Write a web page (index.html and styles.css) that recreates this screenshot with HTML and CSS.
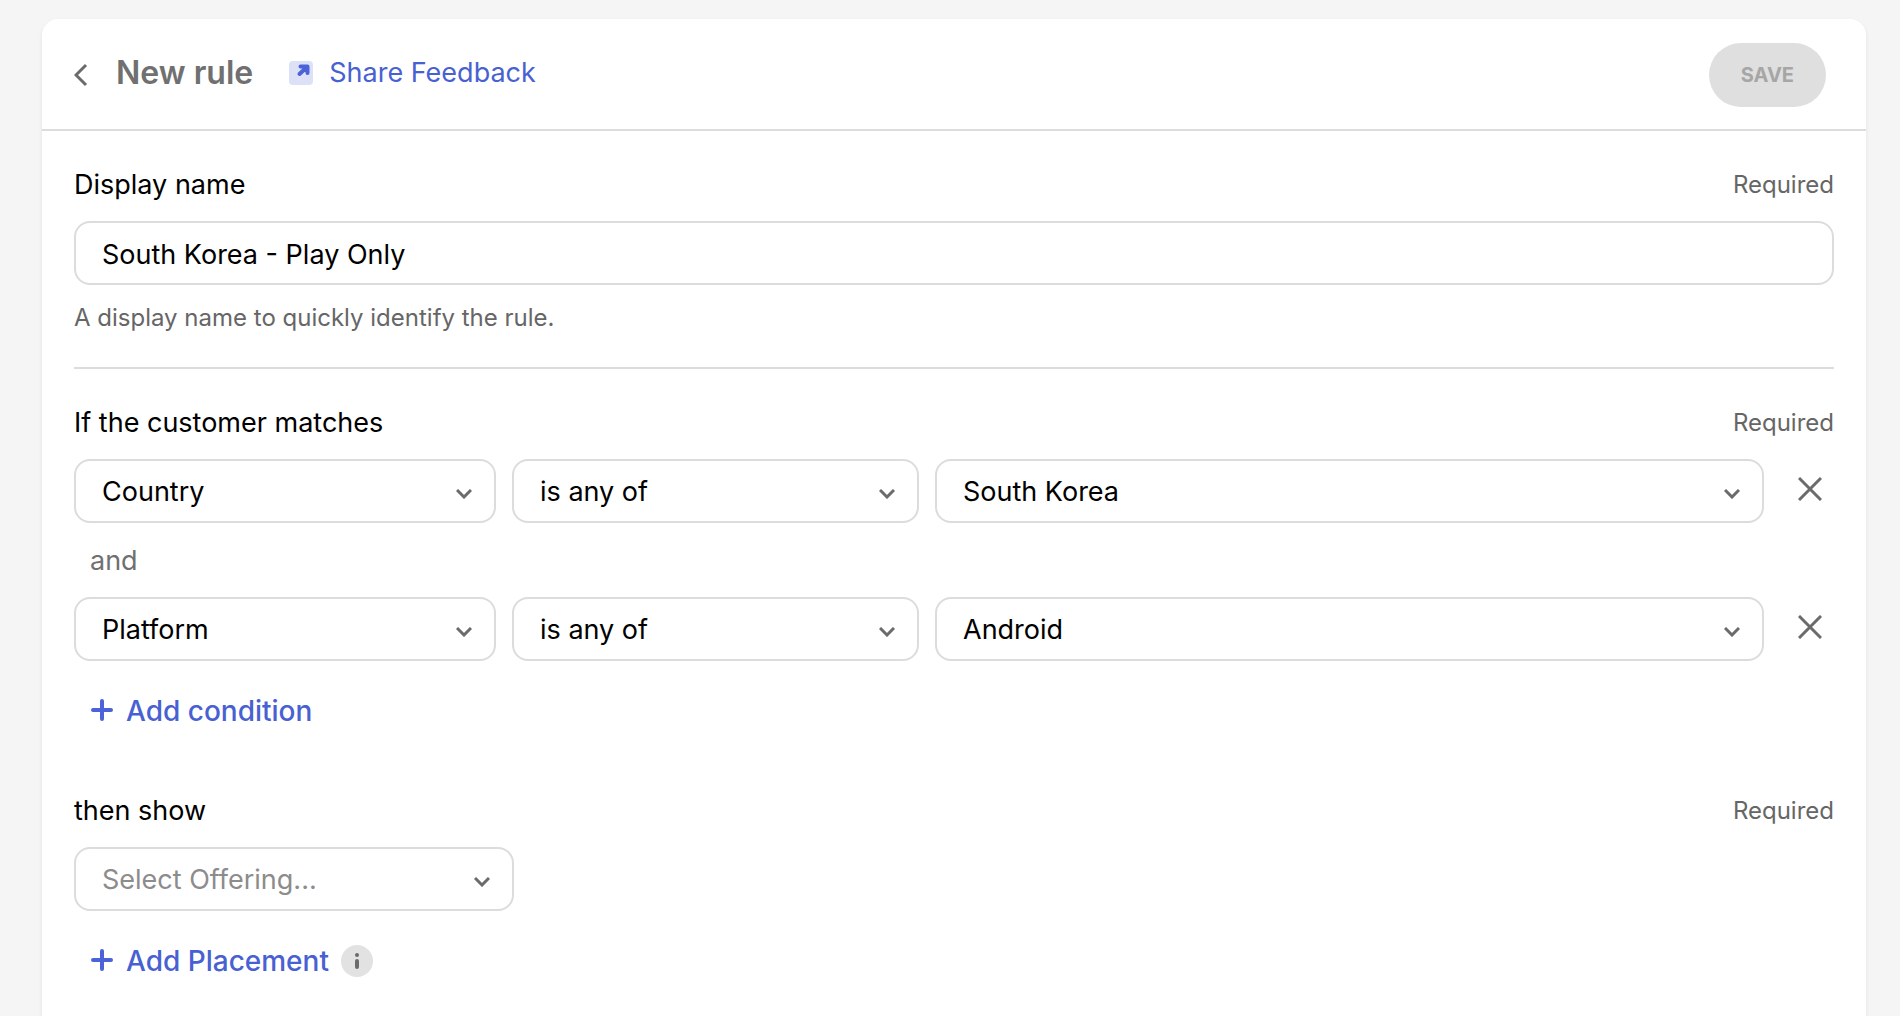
FILE: index.html
```
<!DOCTYPE html>
<html lang="en">
	<head>
		<meta charset="utf-8">
		<meta name="viewport" content="width=device-width, initial-scale=1">
		<title>New rule</title>
		<link rel="stylesheet" href="styles.css">
	</head>
	<body>
		<form class="card">
			<header class="header">
				<button type="button" class="back" aria-label="Back">
					<svg width="14" height="24" viewBox="0 0 14 24"><path d="M12 2L2 12l10 10"/></svg>
				</button>
				<h1>New rule</h1>
				<a href="#" class="feedback">
					<svg width="24" height="24" viewBox="0 0 24 24">
						<rect width="24" height="24" rx="4" fill="#dce1f7"/>
						<path d="M11.500 5.500h7v6.500M18 6l-7.500 7" fill="none" stroke="#4b62d8" stroke-width="4" stroke-linejoin="round" stroke-linecap="round"/>
					</svg>
					<span>Share Feedback</span>
				</a>
				<button type="submit" class="save" disabled>SAVE</button>
			</header>

			<main class="content">
				<section class="section">
					<div class="sectionTop">
						<label for="displayName">Display name</label>
						<span class="required">Required</span>
					</div>
					<input type="text" id="displayName" class="field" value="South Korea - Play Only">
					<p class="help">A display name to quickly identify the rule.</p>
				</section>

				<section class="section conditions">
					<div class="sectionTop">
						<h2>If the customer matches</h2>
						<span class="required">Required</span>
					</div>
					<div class="condition">
						<div class="select">
							<select class="field" aria-label="Attribute"><option>Country</option></select>
							<svg class="arrow" width="16" height="10" viewBox="0 0 16 10"><path d="M1 1l7 7 7-7"/></svg>
						</div>
						<div class="select">
							<select class="field" aria-label="Operator"><option>is any of</option></select>
							<svg class="arrow" width="16" height="10" viewBox="0 0 16 10"><path d="M1 1l7 7 7-7"/></svg>
						</div>
						<div class="select">
							<select class="field" aria-label="Value"><option>South Korea</option></select>
							<svg class="arrow" width="16" height="10" viewBox="0 0 16 10"><path d="M1 1l7 7 7-7"/></svg>
						</div>
						<button type="button" class="remove" aria-label="Remove condition">
							<svg width="24" height="24" viewBox="0 0 24 24"><path d="M1 1l22 22M23 1L1 23"/></svg>
						</button>
					</div>
					<p class="and">and</p>
					<div class="condition">
						<div class="select">
							<select class="field" aria-label="Attribute"><option>Platform</option></select>
							<svg class="arrow" width="16" height="10" viewBox="0 0 16 10"><path d="M1 1l7 7 7-7"/></svg>
						</div>
						<div class="select">
							<select class="field" aria-label="Operator"><option>is any of</option></select>
							<svg class="arrow" width="16" height="10" viewBox="0 0 16 10"><path d="M1 1l7 7 7-7"/></svg>
						</div>
						<div class="select">
							<select class="field" aria-label="Value"><option>Android</option></select>
							<svg class="arrow" width="16" height="10" viewBox="0 0 16 10"><path d="M1 1l7 7 7-7"/></svg>
						</div>
						<button type="button" class="remove" aria-label="Remove condition">
							<svg width="24" height="24" viewBox="0 0 24 24"><path d="M1 1l22 22M23 1L1 23"/></svg>
						</button>
					</div>
					<div class="addRow">
						<button type="button" class="add">
							<svg width="24" height="24" viewBox="0 0 24 24"><path d="M12 2v18M3 11h18"/></svg>
							<span>Add condition</span>
						</button>
					</div>
				</section>

				<section class="section offerings">
					<div class="sectionTop">
						<label for="offering">then show</label>
						<span class="required">Required</span>
					</div>
					<div class="select offering">
						<select id="offering" class="field placeholder"><option>Select Offering...</option></select>
						<svg class="arrow" width="16" height="10" viewBox="0 0 16 10"><path d="M1 1l7 7 7-7"/></svg>
					</div>
					<div class="addRow">
						<button type="button" class="add">
							<svg width="24" height="24" viewBox="0 0 24 24"><path d="M12 2v18M3 11h18"/></svg>
							<span>Add Placement</span>
						</button>
						<button type="button" class="info" aria-label="About placements">
							<svg width="32" height="32" viewBox="0 0 32 32">
								<circle cx="16" cy="16" r="16" fill="#e2e2e2"/>
								<circle cx="16" cy="10" r="2" fill="#6b6b6b"/>
								<rect x="14" y="14" width="4" height="10" rx="2" fill="#6b6b6b"/>
							</svg>
						</button>
					</div>
				</section>
			</main>
		</form>
	</body>
</html>
```

FILE: styles.css
```
*{
	padding: 0;
	margin: 0;
	box-sizing: border-box;
}
body{
	display: flex;
	min-height: 100vh;
	padding: 19px 34px 0 42px;
	background-color: #f5f5f5;
	font-family: Inter, "Liberation Sans", sans-serif;
	font-size: 27px;
	line-height: 34px;
	color: #000;
}
svg{
	display: block;
	flex-shrink: 0;
}
button{
	border: none;
	background: none;
	font: inherit;
	cursor: pointer;
}
h2{
	font-size: 27px;
	font-weight: 400;
}
.card{
	flex: 1;
	min-width: 0;
	background-color: #fff;
	border-radius: 16px 16px 0 0;
	box-shadow: 0 2px 4px rgba(0, 0, 0, .08);
}

/* header */
.header{
	display: flex;
	align-items: center;
	padding: 24px 40px 22px 32px;
	border-bottom: 2px solid #dcdcdc;
}
.back path,
.remove path,
.arrow path{
	fill: none;
	stroke: #6b6b6b;
	stroke-width: 3;
}
.header h1{
	margin-left: 28px;
	padding-bottom: 4px;
	font-size: 32px;
	font-weight: 600;
	color: #707070;
}
.feedback{
	display: flex;
	align-items: center;
	gap: 16px;
	margin-left: 36px;
	padding-bottom: 4px;
	color: #4861d2;
	text-decoration: none;
}
.save{
	height: 64px;
	margin-left: auto;
	padding: 0 32px;
	border-radius: 32px;
	background-color: #dfdfdf;
	font-size: 20px;
	font-weight: 700;
	color: #a6a6a6;
}

/* form */
.content{
	padding: 0 32px;
}
.section{
	padding: 37px 0 34px;
}
.sectionTop{
	display: flex;
	justify-content: space-between;
	align-items: center;
	margin-bottom: 19px;
}
.required{
	font-size: 24px;
	color: #666;
}
.field{
	display: block;
	width: 100%;
	height: 64px;
	padding: 2px 26px 0;
	border: 2px solid #dcdcdc;
	border-radius: 16px;
	background-color: #fff;
	font: inherit;
	color: #000;
	appearance: none;
}
.help{
	margin-top: 18px;
	font-size: 24px;
	line-height: 30px;
	color: #666;
}
.conditions{
	border-top: 2px solid #dcdcdc;
	padding-bottom: 29px;
}
.offerings{
	padding-bottom: 16px;
}
.condition{
	display: grid;
	grid-template-columns: 422fr 407fr 829fr 54px;
	gap: 16px;
	align-items: center;
}
.remove{
	display: flex;
	justify-content: center;
	justify-self: end;
	width: 48px;
	padding-bottom: 4px;
}
.and{
	padding: 21px 16px 19px;
	color: #707070;
}

/* arrow shares the grid cell of its select */
.select{
	display: grid;
	align-items: center;
}
.select .field,
.select .arrow{
	grid-area: 1 / 1;
}
.select .arrow{
	justify-self: end;
	margin-top: 5px;
	margin-right: 24px;
	pointer-events: none;
}
.offering{
	max-width: 440px;
}
.placeholder{
	color: #8c8c8c;
}
.addRow{
	display: flex;
	align-items: center;
	gap: 12px;
	padding: 33px 16px 0;
}
.add{
	display: flex;
	align-items: center;
	gap: 12px;
	font-size: 28px;
	font-weight: 500;
	color: #4861d2;
}
.add path{
	fill: none;
	stroke: #4b62d8;
	stroke-width: 4;
	stroke-linecap: round;
}
```
